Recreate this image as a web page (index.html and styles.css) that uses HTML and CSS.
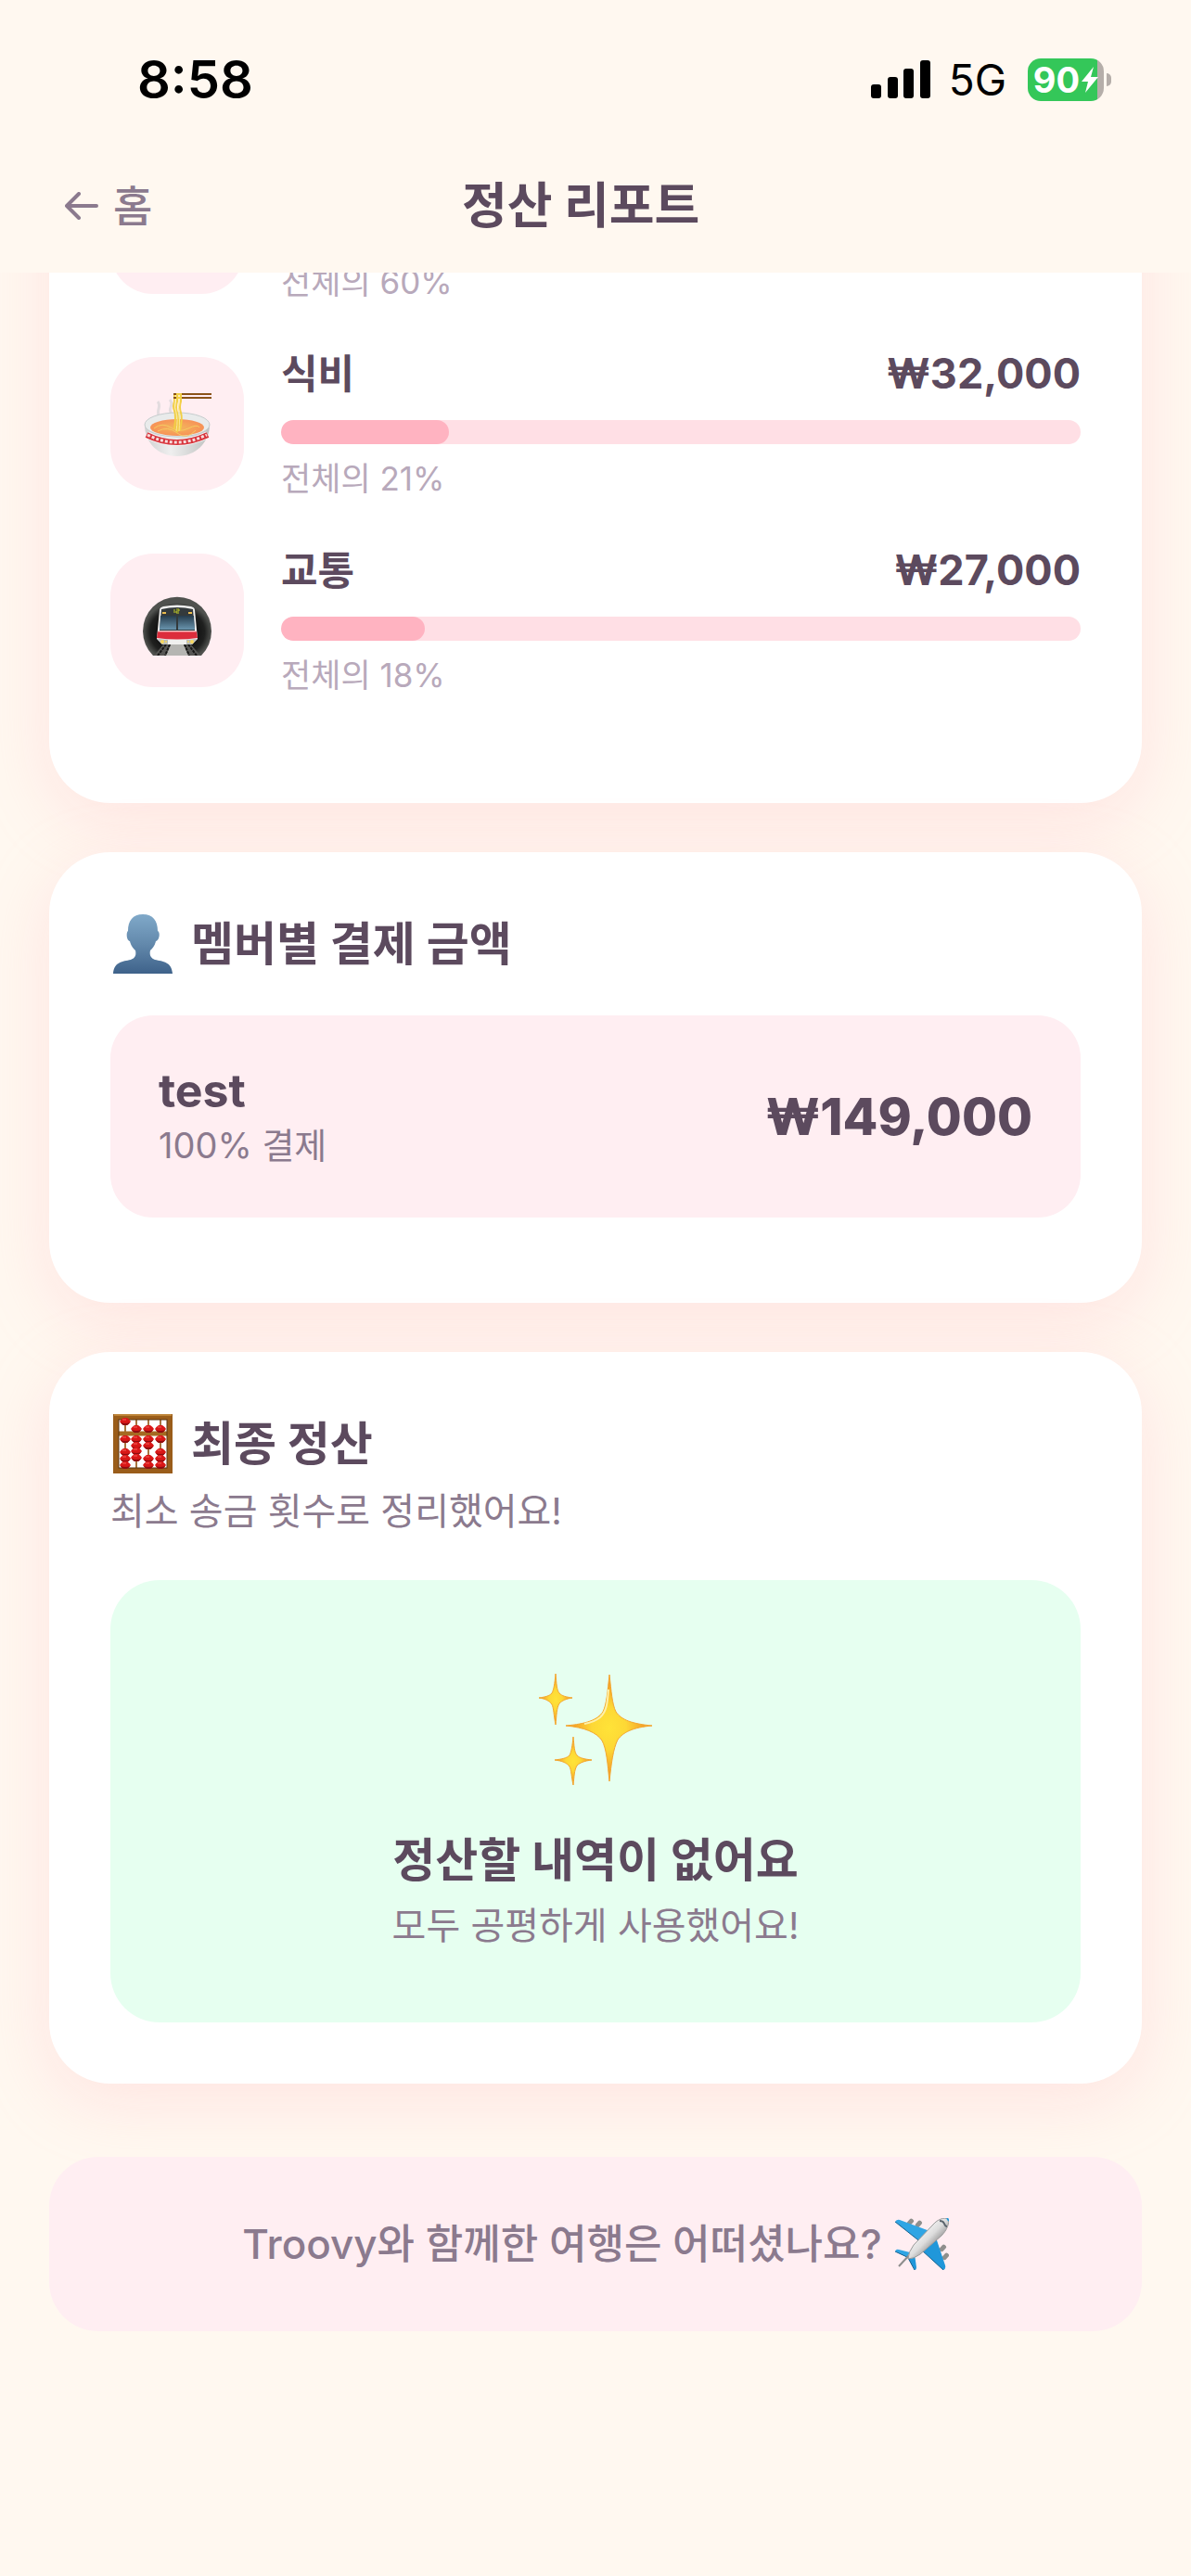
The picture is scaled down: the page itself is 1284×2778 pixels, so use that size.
FILE: index.html
```html
<!DOCTYPE html>
<html lang="ko">

<head>
    <meta charset="UTF-8">
    <meta name="viewport" content="width=device-width, initial-scale=1.0">
    <title>정산 리포트</title>
    <link rel="stylesheet" href="styles.css">
</head>

<body>

    <header class="top">
        <div class="status-bar">
            <span class="time">8:58</span>
            <div class="status-icons">
                <svg class="signal" width="64" height="42" viewBox="0 0 64 42">
                    <rect x="0" y="26" width="11" height="15" rx="3" />
                    <rect x="18" y="18" width="11" height="23" rx="3" />
                    <rect x="35" y="9" width="11" height="32" rx="3" />
                    <rect x="53" y="0" width="11" height="41" rx="3" />
                </svg>
                <span class="network">5G</span>
                <div class="battery">
                    <span>90</span>
                    <svg width="18" height="28" viewBox="0 0 18 28">
                        <path d="M13 0 L0 16 H7 L4 28 L18 11 H10 Z" fill="#fff" />
                    </svg>
                </div>
            </div>
        </div>

        <nav class="nav">
            <a href="#" class="back">
                <svg width="36" height="30" viewBox="0 0 36 30">
                    <path d="M34 15 H2 M15 2 L2 15 L15 28" fill="none" stroke="#8b7a8e" stroke-width="4" stroke-linecap="round" stroke-linejoin="round" />
                </svg>
                홈
            </a>
            <h1>정산 리포트</h1>
            <span class="nav-spacer"></span>
        </nav>
    </header>

    <main>
        <!-- Category breakdown -->
        <section class="card">
            <ul class="category-list">
                <li class="category">
                    <div class="category-icon"></div>
                    <div class="category-body">
                        <div class="category-head"></div>
                        <div class="bar"><div class="bar-fill" style="width: 60%"></div></div>
                        <p class="share">전체의 60%</p>
                    </div>
                </li>
                <li class="category">
                    <div class="category-icon">
                        <svg width="76" height="76" viewBox="0 0 76 76">
                            <defs>
                                <linearGradient id="bowl" x1="0" x2="1">
                                    <stop offset="0" stop-color="#d0d0d0" />
                                    <stop offset=".4" stop-color="#efefef" />
                                    <stop offset="1" stop-color="#bfc1c0" />
                                </linearGradient>
                                <radialGradient id="soup">
                                    <stop offset="0" stop-color="#f3b65c" />
                                    <stop offset="1" stop-color="#f79257" />
                                </radialGradient>
                            </defs>
                            <path d="M19 30 C14 24 22 20 17 14 M33 28 C26 22 36 18 30 12" fill="none" stroke="#e3dcdf" stroke-width="3" />
                            <path d="M3 39 C3 58 17 73 38 73 C58 73 73 58 73 39 Z" fill="url(#bowl)" />
                            <path d="M5 50 Q37 66 71 50" fill="none" stroke="#f4f4f4" stroke-width="8" />
                            <path d="M5 50 Q37 66 71 50" fill="none" stroke="#d8343c" stroke-width="6" />
                            <path d="M6 50 Q37 66 70 50" fill="none" stroke="#f6dcdc" stroke-width="3" stroke-dasharray="3 2" />
                            <ellipse cx="38" cy="39" rx="35" ry="13" fill="#e9ebeb" stroke="#c5cccd" />
                            <ellipse cx="38" cy="42" rx="29" ry="9" fill="url(#soup)" />
                            <path d="M13 43 Q22 36 31 42 T50 43 T62 42 M17 46 Q28 40 38 48 T58 45" fill="none" stroke="#f5cb62" />
                            <path d="M35 5 V14 Q33 19 35 24 T35 44 M38 5 V14 Q36 20 38 26 T38 47 M42 5 V14 Q40 20 42 26 T41 45" fill="none" stroke="#f2cf45" stroke-width="2" />
                            <path d="M36 5 V16 Q35 20 37 26 T37 46 M40 5 V16 Q39 20 40 26 T40 46" fill="none" stroke="#fbeb91" />
                            <path d="M34 6 H75 M34 10 H75" stroke="#8a5319" stroke-width="2" />
                            <path d="M37 6 H43 M37 10 H43" stroke="#f2cf45" stroke-width="2" />
                        </svg>
                    </div>
                    <div class="category-body">
                        <div class="category-head">
                            <span class="name">식비</span>
                            <strong class="price">₩32,000</strong>
                        </div>
                        <div class="bar"><div class="bar-fill" style="width: 21%"></div></div>
                        <p class="share">전체의 21%</p>
                    </div>
                </li>
                <li class="category">
                    <div class="category-icon">
                        <svg width="76" height="76" viewBox="0 0 76 76">
                            <defs>
                                <radialGradient id="tunnel" cy=".6">
                                    <stop offset=".4" stop-color="#0a0a0a" />
                                    <stop offset=".8" stop-color="#1f201f" />
                                    <stop offset="1" stop-color="#50524f" />
                                </radialGradient>
                                <linearGradient id="glass" x1="0" y1="0" x2="0" y2="1">
                                    <stop offset="0" stop-color="#263c4c" />
                                    <stop offset="1" stop-color="#6994ae" />
                                </linearGradient>
                            </defs>
                            <path d="M12 76 A37 37 0 1 1 64 76 Z" fill="url(#tunnel)" />
                            <path d="M24 63 H52 L63 76 H13 Z" fill="#575755" />
                            <path d="M31 64 H45 L50 76 H26 Z" fill="#b5b5b2" />
                            <path d="M26 64 L17 76 M30 64 L25 76 M50 64 L59 76 M46 64 L51 76" stroke="#161616" stroke-width="2" stroke-dasharray="3 1" />
                            <path d="M19 27 Q19 24 23 23 Q38 20 53 23 Q57 24 57 27 L60 58 L54 64 H22 L16 58 Z" fill="#f0f0ef" />
                            <path d="M21 26 Q38 22 55 26 L57 49 H19 Z" fill="#343a3c" />
                            <path d="M20 33 H37 V48 H19 Z M39 33 H56 L57 48 H39 Z" fill="url(#glass)" />
                            <path d="M35 26 V30 M37 26 H40 V28 H37 V30 H40" fill="none" stroke="#c4ce24" />
                            <path d="M22 30 H26 M50 30 H54" stroke="#e9bc4d" stroke-width="2" />
                            <path d="M17 50 H59 L60 57 Q38 60 16 57 Z" fill="#dc2d3c" />
                            <path d="M17 50 H59" stroke="#f8a8ac" />
                            <path d="M17 58 L28 59 V64 H22 Z M59 58 L48 59 V64 H54 Z" fill="#b9bcba" />
                            <g fill="#f7d75e">
                                <circle cx="22" cy="61" r="2" />
                                <circle cx="26" cy="61" r="1" />
                                <circle cx="54" cy="61" r="2" />
                                <circle cx="50" cy="61" r="1" />
                            </g>
                        </svg>
                    </div>
                    <div class="category-body">
                        <div class="category-head">
                            <span class="name">교통</span>
                            <strong class="price">₩27,000</strong>
                        </div>
                        <div class="bar"><div class="bar-fill" style="width: 18%"></div></div>
                        <p class="share">전체의 18%</p>
                    </div>
                </li>
            </ul>
        </section>

        <!-- Paid per member -->
        <section class="card">
            <h2>
                <svg width="64" height="64" viewBox="0 0 64 64">
                    <defs>
                        <linearGradient id="person" x1="0" y1="0" x2="0" y2="1">
                            <stop offset="0" stop-color="#80a9c9" />
                            <stop offset=".5" stop-color="#6389ac" />
                            <stop offset="1" stop-color="#3e628a" />
                        </linearGradient>
                    </defs>
                    <path d="M32 0 C43 0 48 7 48 18 C51 19 50 28 46 29 C45 34 42 37 40 39 C39 44 40 47 45 49 C54 51 63 51 64 64 H0 C1 51 10 51 19 49 C24 47 25 44 24 39 C22 37 19 34 18 29 C14 28 14 19 16 18 C16 7 21 0 32 0 Z" fill="url(#person)" />
                </svg>
                멤버별 결제 금액
            </h2>
            <div class="member">
                <div>
                    <p class="member-name">test</p>
                    <p class="member-share">100% 결제</p>
                </div>
                <strong class="member-total">₩149,000</strong>
            </div>
        </section>

        <!-- Final settlement -->
        <section class="card">
            <h2 class="with-sub">
                <svg width="64" height="64" viewBox="0 0 64 64">
                    <defs>
                        <g id="bead">
                            <path d="M-6 0 Q-5 -2 -2 -4 H2 Q5 -2 6 0 Q5 2 2 4 H-2 Q-5 2 -6 0 Z" fill="#d91717" />
                            <path d="M-5 1 Q0 3 5 1 Q4 3 2 4 H-2 Q-4 3 -5 1 Z" fill="#8e0d10" />
                            <path d="M-3 -2 H1" stroke="#f4605a" />
                        </g>
                    </defs>
                    <path d="M13 4 V60 M25 4 V60 M38 4 V60 M51 4 V60" stroke="#a8743f" stroke-width="2" />
                    <path d="M3 21 H61" stroke="#a56a22" stroke-width="5" />
                    <rect x="3" y="3" width="58" height="58" fill="none" stroke="#9a5d1a" stroke-width="6" />
                    <rect x="6" y="6" width="52" height="52" fill="none" stroke="#593511" />
                    <path d="M1 1 H63" stroke="#bd8337" stroke-width="2" />
                    <use href="#bead" x="13" y="8" />
                    <use href="#bead" x="25" y="16" />
                    <use href="#bead" x="38" y="16" />
                    <use href="#bead" x="51" y="16" />
                    <use href="#bead" x="13" y="27" />
                    <use href="#bead" x="25" y="27" />
                    <use href="#bead" x="38" y="27" />
                    <use href="#bead" x="51" y="27" />
                    <use href="#bead" x="25" y="34" />
                    <use href="#bead" x="38" y="34" />
                    <use href="#bead" x="25" y="40" />
                    <use href="#bead" x="25" y="47" />
                    <use href="#bead" x="13" y="41" />
                    <use href="#bead" x="13" y="48" />
                    <use href="#bead" x="13" y="55" />
                    <use href="#bead" x="38" y="48" />
                    <use href="#bead" x="38" y="55" />
                    <use href="#bead" x="51" y="41" />
                    <use href="#bead" x="51" y="48" />
                    <use href="#bead" x="51" y="55" />
                </svg>
                최종 정산
            </h2>
            <p class="sub">최소 송금 횟수로 정리했어요!</p>
            <div class="empty">
                <div class="empty-icon">
                    <svg width="124" height="122" viewBox="0 0 124 122">
                        <defs>
                            <radialGradient id="spark">
                                <stop offset="0" stop-color="#ffe338" />
                                <stop offset=".4" stop-color="#fdd835" />
                                <stop offset="1" stop-color="#f08a24" />
                            </radialGradient>
                        </defs>
                        <g fill="url(#spark)" stroke="#f4a62e">
                            <path d="M77 2 C79 20 80 34 84 42 C90 51 102 55 123 57 C102 59 92 64 86 72 C81 82 79 98 77 117 C75 98 74 82 69 73 C63 64 50 59 30 57 C52 55 64 51 70 42 C74 34 75 20 77 2 Z" />
                            <path d="M19 1 C20 12 20 18 23 22 C26 25 30 26 37 27 C30 28 26 30 23 33 C20 38 20 46 19 56 C17 46 17 38 15 34 C12 30 8 28 1 27 C8 26 12 25 15 22 C17 18 18 12 19 1 Z" />
                            <path d="M38 69 C39 79 39 85 42 89 C45 92 50 93 58 94 C50 95 45 97 42 100 C39 105 39 112 38 121 C36 112 36 105 34 101 C31 97 26 95 18 94 C26 93 31 92 34 89 C36 85 37 79 38 69 Z" />
                        </g>
                        <path d="M76 18 C75 32 74 42 67 48 C62 52 56 54 50 55" fill="none" stroke="#fff0a8" stroke-width="2" />
                    </svg>
                </div>
                <h3>정산할 내역이 없어요</h3>
                <p>모두 공평하게 사용했어요!</p>
            </div>
        </section>

        <footer class="closing">
            <p>Troovy와 함께한 여행은 어떠셨나요?</p>
            <svg width="58" height="56" viewBox="0 0 58 56">
                <defs>
                    <linearGradient id="fuselage" x1="0" y1="0" x2="1" y2="1">
                        <stop offset=".3" stop-color="#f6f6f6" />
                        <stop offset=".5" stop-color="#dcdcdc" />
                        <stop offset=".7" stop-color="#8d8d8d" />
                    </linearGradient>
                </defs>
                <g fill="#8f8f8d">
                    <rect x="14" y="0" width="5" height="8" rx="2" transform="rotate(42 16 4)" />
                    <rect x="23" y="2" width="5" height="8" rx="2" transform="rotate(42 25 6)" />
                    <rect x="49" y="28" width="5" height="8" rx="2" transform="rotate(42 51 32)" />
                    <rect x="52" y="37" width="5" height="8" rx="2" transform="rotate(42 54 41)" />
                </g>
                <path d="M0 4 Q2 1 5 2 L40 15 L29 27 Z" fill="#2fa5e4" />
                <path d="M43 18 L54 51 Q55 55 52 56 L28 34 Z" fill="#2097da" />
                <path d="M0 36 Q1 33 4 34 L20 38 L15 43 Z" fill="#2fa5e4" />
                <path d="M21 39 L23 53 Q23 56 21 56 L14 43 Z" fill="#2097da" />
                <path d="M0 4 L29 27 M28 34 L52 56 M0 36 L15 43 M14 43 L21 56" stroke="#15618f" />
                <path d="M4 52 L17 38" stroke="#8d8d8d" stroke-width="2" />
                <path d="M57 1 C59 5 56 13 50 19 L27 39 Q20 44 14 44 Q14 37 20 29 L41 7 C46 1 53 -1 57 1 Z" fill="url(#fuselage)" stroke="#9b9b9b" />
                <path d="M48 3 Q52 3 53 6 T56 9" fill="none" stroke="#59636b" stroke-width="2" />
                <path d="M56 0 L58 3" stroke="#2097da" stroke-width="2" />
            </svg>
        </footer>
    </main>

</body>

</html>
```

FILE: styles.css
```css
* {
    margin: 0;
    padding: 0;
    box-sizing: border-box;
}

body {
    min-height: 100vh;
    background-color: #fff8f0;
    color: #5c4a5e;
    font-family: Inter, "Noto Sans CJK KR", sans-serif;
}

svg {
    display: block;
    flex-shrink: 0;
}

/* Header */
.top {
    position: sticky;
    top: 0;
    z-index: 10;
    background-color: #fff8f0;
}

.status-bar {
    display: flex;
    justify-content: space-between;
    align-items: center;
    height: 150px;
    padding: 22px 86px 0 148px;
    color: #000;
}

.time {
    font-size: 56px;
    font-weight: 600;
}

.status-icons {
    display: flex;
    align-items: center;
}

.network {
    margin: 0 23px 0 20px;
    font-size: 46px;
}

.battery {
    position: relative;
    display: flex;
    align-items: center;
    justify-content: center;
    gap: 2px;
    width: 82px;
    height: 46px;
    margin-right: 8px;
    border-radius: 14px;
    background: linear-gradient(to right, #34c759 91%, #b5aea9 91%);
    color: #fff;
    font-size: 38px;
    font-weight: 700;
}

.battery::after {
    content: "";
    position: absolute;
    right: -8px;
    top: 16px;
    width: 5px;
    height: 14px;
    border-radius: 0 5px 5px 0;
    background-color: #b5aea9;
}

.nav {
    display: flex;
    justify-content: space-between;
    align-items: center;
    height: 144px;
    padding: 0 70px;
    line-height: 66px;
}

.back {
    display: flex;
    align-items: center;
    gap: 16px;
    color: #8b7a8e;
    font-size: 46px;
    font-weight: 500;
    text-decoration: none;
}

.nav-spacer {
    width: 126px;
}

h1 {
    font-size: 53px;
    font-weight: 700;
}

/* Cards */
main {
    display: flex;
    flex-direction: column;
    gap: 53px;
    margin-top: -201px;
    padding: 0 53px 53px;
}

.card {
    padding: 66px;
    border-radius: 66px;
    background-color: #fff;
    box-shadow: 0 18px 72px rgba(255, 182, 193, 0.3);
}

h2 {
    display: flex;
    align-items: center;
    gap: 20px;
    margin-bottom: 44px;
    padding-left: 3px;
    font-size: 50px;
    font-weight: 700;
    line-height: 66px;
}

.with-sub {
    margin-bottom: 10px;
}

/* Category rows */
.category-list {
    display: flex;
    flex-direction: column;
    gap: 40px;
    padding-bottom: 45px;
    list-style: none;
}

.category {
    display: flex;
    align-items: center;
    gap: 40px;
}

.category-icon {
    display: flex;
    align-items: center;
    justify-content: center;
    flex-shrink: 0;
    width: 144px;
    height: 144px;
    border-radius: 46px;
    background-color: #ffeef2;
}

.category-body {
    flex: 1;
}

.category-head {
    display: flex;
    justify-content: space-between;
    height: 64px;
    margin-bottom: 18px;
    line-height: 64px;
}

.name {
    font-size: 43px;
    font-weight: 600;
}

.price {
    font-size: 45px;
    font-weight: 700;
}

.bar {
    height: 26px;
    border-radius: 13px;
    background-color: #ffdfe5;
    overflow: hidden;
}

.bar-fill {
    height: 100%;
    border-radius: 13px;
    background-color: #ffb3c1;
}

.share {
    margin-top: 10px;
    color: #b8a9bb;
    font-size: 35px;
    line-height: 54px;
}

/* Member row */
.member {
    display: flex;
    justify-content: space-between;
    align-items: center;
    margin-bottom: 26px;
    padding: 50px 52px;
    border-radius: 46px;
    background-color: #ffeef2;
}

.member-name {
    font-size: 50px;
    font-weight: 700;
    line-height: 62px;
}

.member-share {
    color: #8b7a8e;
    font-size: 38px;
    line-height: 56px;
}

.member-total {
    font-size: 55px;
    font-weight: 800;
}

/* Settlement */
.sub {
    margin-bottom: 44px;
    color: #8b7a8e;
    font-size: 40px;
    line-height: 60px;
}

.empty {
    padding: 74px;
    border-radius: 53px;
    background-color: #e6fff0;
    text-align: center;
}

.empty-icon {
    display: flex;
    align-items: center;
    justify-content: center;
    height: 174px;
    margin-bottom: 21px;
}

h3 {
    margin-bottom: 8px;
    font-size: 50px;
    font-weight: 700;
    line-height: 66px;
}

.empty p {
    color: #8b7a8e;
    font-size: 40px;
    line-height: 60px;
}

.closing {
    display: flex;
    align-items: center;
    justify-content: center;
    gap: 14px;
    margin-top: 26px;
    padding: 62px;
    border-radius: 53px;
    background-color: #ffeef2;
    color: #8b7a8e;
    font-size: 44px;
    font-weight: 500;
    line-height: 64px;
}
```
